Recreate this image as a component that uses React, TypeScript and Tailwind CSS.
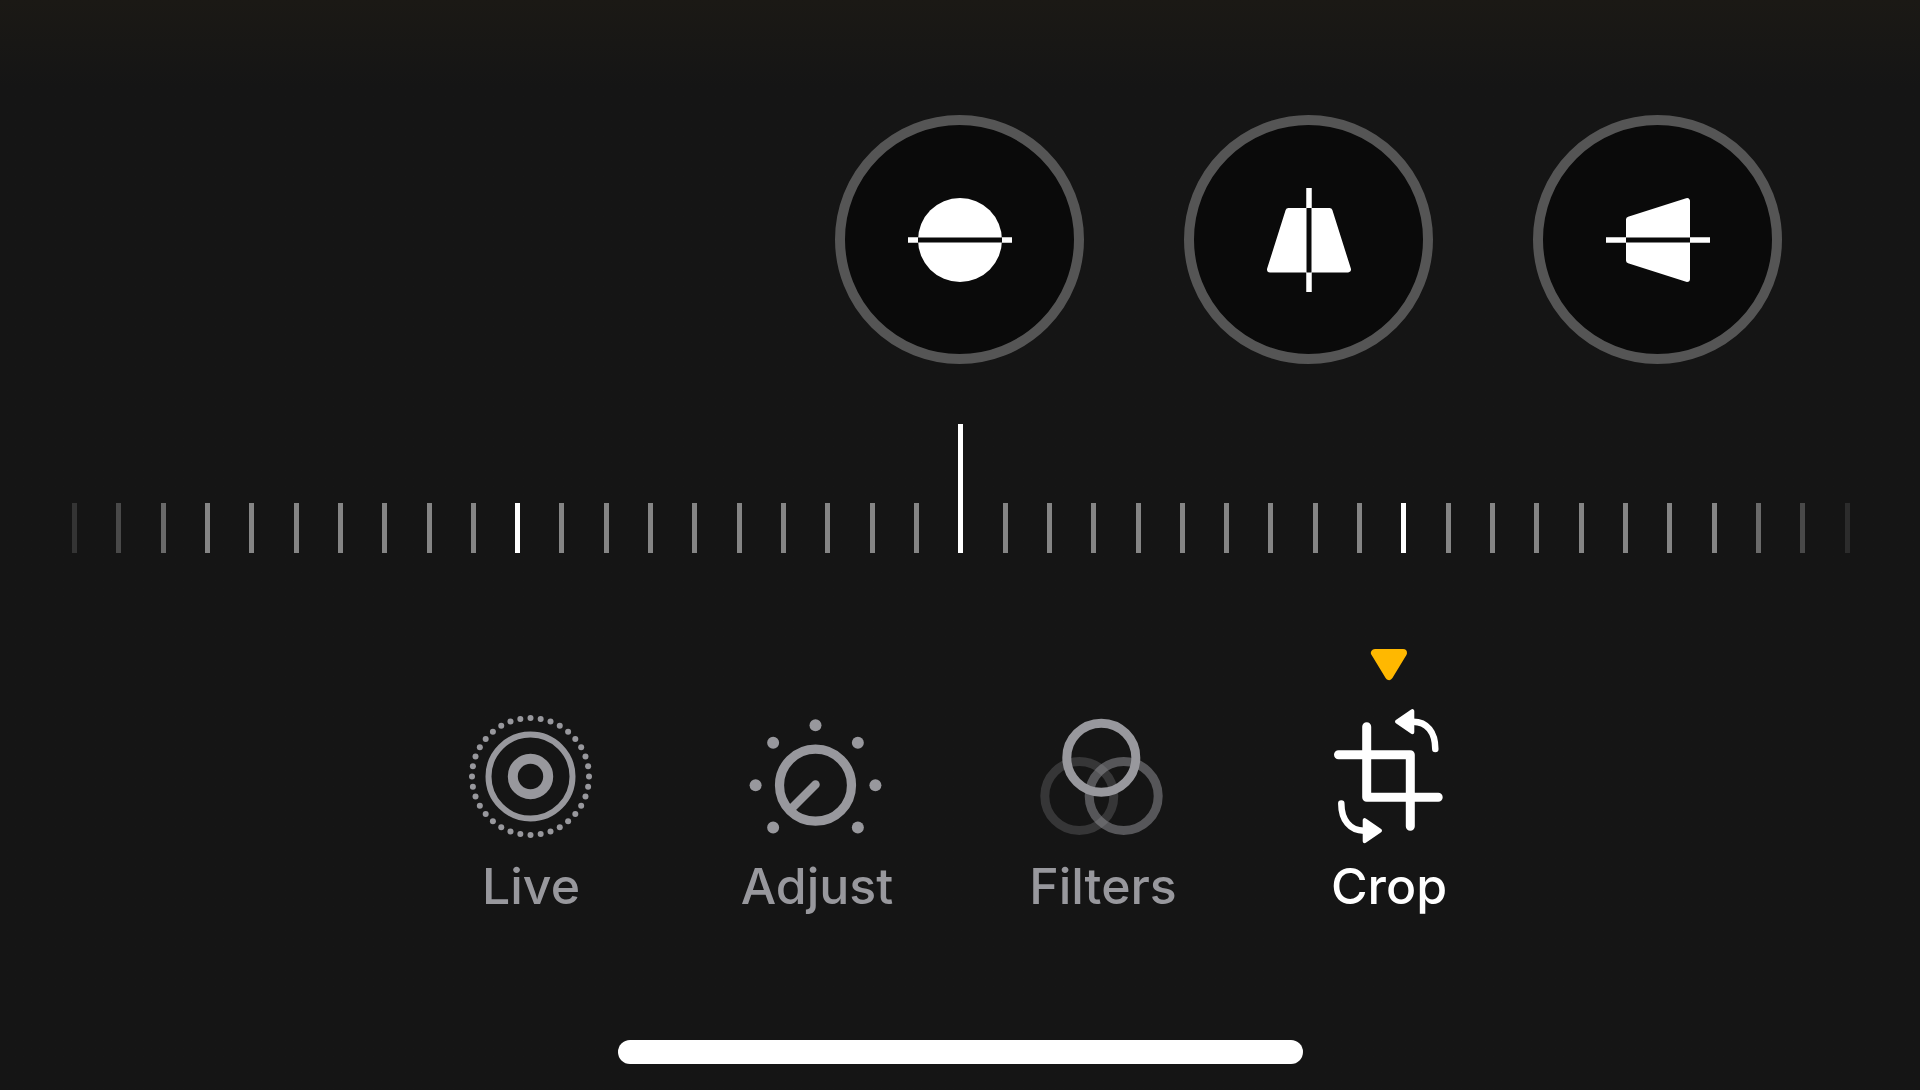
import { useState } from "react"

type IconProps = { className?: string }

const StraightenIcon = () => (
  <svg viewBox="0 0 104 104" className="w-[104px] h-[104px]">
    <circle cx="52" cy="52" r="42" fill="#fff" />
    <path d="M0 52H10M94 52H104" stroke="#fff" strokeWidth="5.5" />
    <path d="M10 52H94" stroke="#0a0a0a" strokeWidth="5" />
  </svg>
)

const VerticalIcon = () => (
  <svg viewBox="0 0 104 104" className="w-[104px] h-[104px]">
    <path
      d="M31.5 23H72.5L91 81.5H13Z"
      fill="#fff"
      stroke="#fff"
      strokeWidth="6"
      strokeLinejoin="round"
    />
    <path d="M52 0V20M52 84V104" stroke="#fff" strokeWidth="5.5" />
    <path d="M52 20V84.5" stroke="#0a0a0a" strokeWidth="5" />
  </svg>
)

const HorizontalIcon = () => (
  <svg viewBox="0 0 104 104" className="w-[104px] h-[104px]">
    <path
      d="M23 31.5L81 13V91L23 72.5Z"
      fill="#fff"
      stroke="#fff"
      strokeWidth="6"
      strokeLinejoin="round"
    />
    <path d="M0 52H20M84 52H104" stroke="#fff" strokeWidth="5.5" />
    <path d="M20 52H84" stroke="#0a0a0a" strokeWidth="5" />
  </svg>
)

const liveDots = Array.from({ length: 36 }, (_, i) => (i * Math.PI) / 18)

const LiveIcon = ({ className }: IconProps) => (
  <svg viewBox="0 0 132 136" className={className} fill="none">
    {liveDots.map((angle) => (
      <circle
        key={angle}
        cx={65.5 + 58.5 * Math.sin(angle)}
        cy={68.5 - 58.5 * Math.cos(angle)}
        r="3"
        fill="currentColor"
      />
    ))}
    <circle cx="65.5" cy="68.5" r="42" stroke="currentColor" strokeWidth="6" />
    <circle cx="65.5" cy="68.5" r="17.7" stroke="currentColor" strokeWidth="10" />
  </svg>
)

const dialDots = [-135, -90, -45, 0, 45, 90, 135]

const AdjustIcon = ({ className }: IconProps) => (
  <svg viewBox="0 0 132 136" className={className} fill="none">
    {dialDots.map((deg) => (
      <circle
        key={deg}
        cx="64.5"
        cy="17.3"
        r="6"
        fill="currentColor"
        transform={`rotate(${deg} 64.5 77.2)`}
      />
    ))}
    <circle cx="64.5" cy="77.2" r="36" stroke="currentColor" strokeWidth="9.2" />
    <path
      d="M64.5 76.5L40 101"
      stroke="currentColor"
      strokeWidth="8.5"
      strokeLinecap="round"
    />
  </svg>
)

const FiltersIcon = ({ className }: IconProps) => (
  <svg viewBox="0 0 132 136" className={className} fill="none" strokeWidth="9">
    <circle cx="42.3" cy="88" r="34.5" stroke="#363637" />
    <circle cx="86.7" cy="88" r="34.5" stroke="#98989d" strokeOpacity="0.5" />
    <circle cx="64.3" cy="49.7" r="34.5" stroke="#98989d" />
  </svg>
)

const CropIcon = ({ className }: IconProps) => (
  <svg
    viewBox="0 0 132 136"
    className={className}
    fill="none"
    stroke="currentColor"
    strokeLinecap="round"
    strokeLinejoin="round">
    <path d="M43.7 18.8V89.3H115.2M15.5 46.7H87.3V118.2" strokeWidth="9" />
    <path d="M90 13.7C104 13.7 112.3 24 112.3 41" strokeWidth="6.5" />
    <path d="M18.3 95.5C18.3 112 27 122.7 41 122.7" strokeWidth="6.5" />
    <path d="M74 13.7L89.3 3.2V24.2Z" fill="currentColor" strokeWidth="4" />
    <path d="M57 122.7L41.7 112.2V133.2Z" fill="currentColor" strokeWidth="4" />
  </svg>
)

const adjustments = [
  { name: "Straighten", Icon: StraightenIcon },
  { name: "Vertical", Icon: VerticalIcon },
  { name: "Horizontal", Icon: HorizontalIcon }
]

const tabs = [
  { name: "Live", Icon: LiveIcon },
  { name: "Adjust", Icon: AdjustIcon },
  { name: "Filters", Icon: FiltersIcon },
  { name: "Crop", Icon: CropIcon }
]

const ticks = Array.from({ length: 41 }, (_, i) => i)

// ticks fade out towards both ends of the ruler
const tickStyle = (i: number) => {
  if (i === 20) return "h-[129px] bg-white"
  if (i === 10 || i === 30) return "h-[50px] bg-white"
  if (i === 0) return "h-[50px] bg-[#343434]"
  if (i === 40) return "h-[50px] bg-[#2c2c2c]"
  if (i === 1 || i === 39) return "h-[50px] bg-[#494949]"
  if (i === 2 || i === 38) return "h-[50px] bg-[#6a6a6a]"
  return "h-[50px] bg-[#858585]"
}

const Ruler = () => {
  const [angle, setAngle] = useState(0)

  return (
    <div className="relative mt-[60px] pl-[72px] pr-[70px]">
      <div className="flex items-end justify-between">
        {ticks.map((i) => (
          <div key={i} className={`w-[5px] ${tickStyle(i)}`}></div>
        ))}
      </div>
      <input
        type="range"
        aria-label="Angle"
        min={-20}
        max={20}
        value={angle}
        onChange={(e) => setAngle(Number(e.target.value))}
        className="absolute inset-0 w-full h-full opacity-0 cursor-pointer"
      />
    </div>
  )
}

const App = () => {
  const [tab, setTab] = useState("Crop")

  return (
    <main className="min-h-screen flex flex-col overflow-hidden bg-[#151515] bg-linear-to-b from-[#1b1915] from-0% to-[#151515] to-8% pt-[115px] font-['Inter',sans-serif]">
      <div className="flex gap-[100px] pl-[calc(50%-125px)]">
        {adjustments.map(({ name, Icon }) => (
          <button
            key={name}
            aria-label={name}
            className="flex shrink-0 items-center justify-center w-[249px] h-[249px] rounded-full border-10 border-[#555555] bg-[#0a0a0a]">
            <Icon />
          </button>
        ))}
      </div>

      <Ruler />

      <nav className="mt-24 flex justify-center">
        {tabs.map(({ name, Icon }) => (
          <button
            key={name}
            onClick={() => setTab(name)}
            className={`flex w-[286px] flex-col items-center font-medium ${tab === name ? "text-white" : "text-[#98989d]"}`}>
            <svg
              viewBox="0 0 38 32"
              className={`w-[38px] h-8 ${tab === name ? "" : "invisible"}`}>
              <path
                d="M5 4H33L19 27Z"
                fill="#ffb800"
                stroke="#ffb800"
                strokeWidth="8"
                strokeLinejoin="round"
              />
            </svg>
            <Icon className="mt-[27px] w-[132px] h-[136px] overflow-visible" />
            <span className="mt-[13px] text-[50px] leading-[58px]">{name}</span>
          </button>
        ))}
      </nav>

      <div className="mt-auto mb-[26px] self-center w-[685px] h-6 rounded-full bg-white"></div>
    </main>
  )
}

export default App
